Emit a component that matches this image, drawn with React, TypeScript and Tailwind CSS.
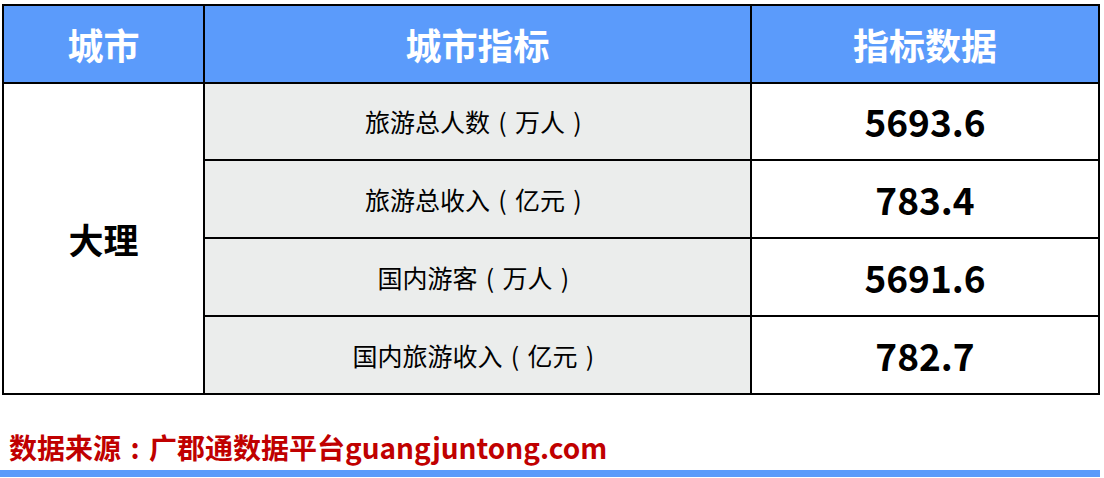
import React from "react";

const font = { fontFamily: '"Noto Sans CJK SC", "Noto Sans", sans-serif' };

const P = ({ c }: { c: string }) => (
  <span className="inline-block w-[1em] text-center">{c}</span>
);

const rows = [
  { pre: "旅游总人数", unit: "万人", value: "5693.6" },
  { pre: "旅游总收入", unit: "亿元", value: "783.4" },
  { pre: "国内游客", unit: "万人", value: "5691.6" },
  { pre: "国内旅游收入", unit: "亿元", value: "782.7" },
];

export default function App() {
  return (
    <div className="w-[1104px] h-[478px] bg-white overflow-hidden" style={font}>
      <div className="pt-[4px] pl-[2px]">
        <div className="w-[1098px] bg-black p-[2px]">
          <div className="grid grid-cols-[199px_545px_346px] grid-rows-[76px_75px_76px_76px_76px] gap-[2px]">
            <div className="bg-[#5b9bfb] flex items-center justify-center text-white text-[36px] font-bold leading-none">
              城市
            </div>
            <div className="bg-[#5b9bfb] flex items-center justify-center text-white text-[36px] font-bold leading-none">
              城市指标
            </div>
            <div className="bg-[#5b9bfb] flex items-center justify-center text-white text-[36px] font-bold leading-none">
              指标数据
            </div>
            <div className="row-span-4 col-start-1 row-start-2 bg-white flex items-center justify-center text-black text-[35px] font-bold leading-none">
              大理
            </div>
            {rows.map((r, i) => (
              <React.Fragment key={i}>
                <div className="col-start-2 bg-[#ebedec] flex items-center justify-center text-black text-[25px] leading-none whitespace-nowrap">
                  <span>
                    {r.pre}
                    <P c="(" />
                    {r.unit}
                    <P c=")" />
                  </span>
                </div>
                <div className="col-start-3 bg-white flex items-center justify-center text-black text-[37px] font-bold leading-none">
                  {r.value}
                </div>
              </React.Fragment>
            ))}
          </div>
        </div>
      </div>
      <div className="mt-[38px] ml-[9px] h-[28px] leading-[28px] text-[28px] font-bold text-[#c00000] whitespace-nowrap">
        数据来源
        <span className="inline-block w-[1em] text-center">:</span>
        广郡通数据平台guangjuntong.com
      </div>
      <div className="mt-[9px] w-[1100px] h-[7px] bg-[#5b9bfb]" />
    </div>
  );
}
